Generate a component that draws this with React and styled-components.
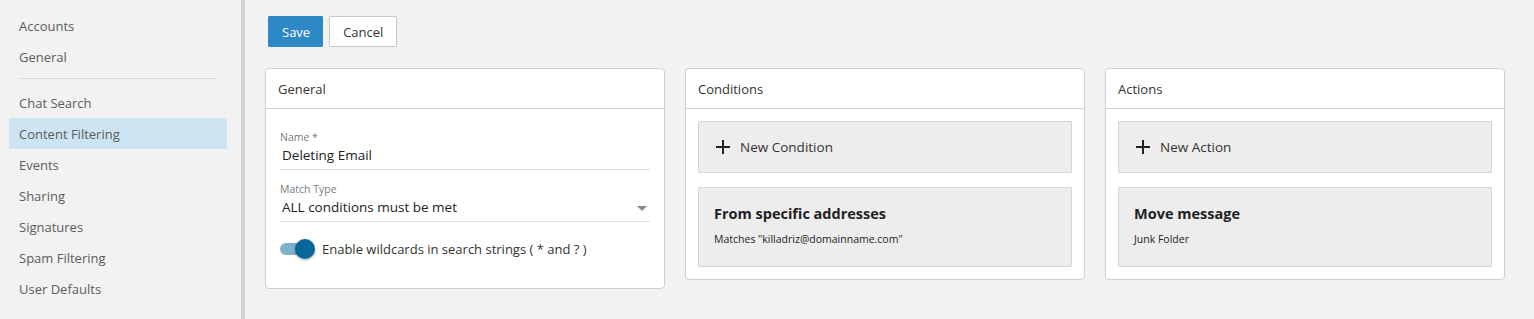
import React from "react";
import styled, { createGlobalStyle } from "styled-components";

const GlobalStyle = createGlobalStyle`
  html, body { margin: 0; padding: 0; background: #f2f2f2; }
  body { font-family: "Open Sans", "Noto Sans", sans-serif; color: #333; }
  * { box-sizing: border-box; }
`;

const Layout = styled.div`
  display: flex;
  min-height: 319px;
`;

const Sidebar = styled.nav`
  width: 245px;
  flex: none;
  border-right: 4px solid #d4d4d4;
  padding: 10px 14px 0 9px;
`;

const NavItem = styled.div`
  height: 31px;
  display: flex;
  align-items: center;
  padding-left: 10px;
  font-size: 13px;
  color: #5c5c5c;
  background: ${(p) => (p.$active ? "#cde4f2" : "transparent")};
`;

const NavDivider = styled.hr`
  border: none;
  border-top: 1px solid #d6d6d6;
  margin: 6px 10px 8px;
`;

const Main = styled.main`
  flex: 1;
  padding: 16px 20px;
`;

const Toolbar = styled.div`
  display: flex;
  gap: 6px;
  padding-left: 3px;
`;

const Button = styled.button`
  height: 31px;
  padding: ${(p) => (p.$primary ? "0 12px 0 13px" : "0 13px")};
  font-family: inherit;
  font-size: 13px;
  border-radius: 1px;
  border: 1px solid ${(p) => (p.$primary ? "#2e88c6" : "#c8c8c8")};
  background: ${(p) => (p.$primary ? "#2e88c6" : "#fff")};
  color: ${(p) => (p.$primary ? "#fff" : "#333")};
`;

const Cards = styled.div`
  display: flex;
  gap: 20px;
  align-items: flex-start;
  margin-top: 21px;
`;

const Card = styled.section`
  width: 400px;
  background: #fff;
  border: 1px solid #cfcfcf;
  border-radius: 4px;
`;

const CardHeader = styled.header`
  height: 40px;
  display: flex;
  align-items: center;
  padding-left: 12px;
  border-bottom: 1px solid #d2d2d2;
  font-size: 13px;
  color: #333;
`;

const FormBody = styled.div`
  display: flex;
  flex-direction: column;
  padding: 21px 14px 29px 14px;
`;

const Field = styled.div`
  border-bottom: 1px solid #dcdcdc;
  padding-bottom: 3px;
  margin-bottom: 12px;
  position: relative;
`;

const FieldLabel = styled.div`
  font-size: 10.5px;
  color: #7a7a7a;
  line-height: 14px;
`;

const FieldValue = styled.div`
  font-size: 13.5px;
  color: #222;
  line-height: 22px;
  padding-left: 2px;
`;

const Caret = styled.span`
  position: absolute;
  right: 3px;
  bottom: 10px;
  width: 0;
  height: 0;
  border-left: 5px solid transparent;
  border-right: 5px solid transparent;
  border-top: 5px solid #8a8a8a;
`;

const ToggleRow = styled.div`
  display: flex;
  align-items: center;
  gap: 8px;
  height: 20px;
  margin-top: 5px;
  font-size: 13px;
  color: #333;
`;

const Track = styled.span`
  position: relative;
  width: 34px;
  height: 12px;
  border-radius: 6px;
  background: #7fb1ca;
`;

const Knob = styled.span`
  position: absolute;
  right: -1px;
  top: -4px;
  width: 20px;
  height: 20px;
  border-radius: 50%;
  background: #07679b;
  box-shadow: 0 1px 3px rgba(0, 0, 0, 0.35);
`;

const ListBody = styled.div`
  display: flex;
  flex-direction: column;
  gap: 14px;
  padding: 12px;
`;

const Tile = styled.div`
  background: #ededed;
  border: 1px solid #d5d5d5;
  border-radius: 1px;
`;

const AddTile = styled(Tile)`
  height: 52px;
  display: flex;
  align-items: center;
  gap: 9px;
  padding-left: 16px;
  font-size: 13.5px;
  color: #333;
`;

const RuleTile = styled(Tile)`
  height: 80px;
  padding: 16px 15px;
`;

const RuleTitle = styled.div`
  font-size: 14.5px;
  font-weight: 700;
  color: #1f1f1f;
  line-height: 20px;
`;

const RuleDetail = styled.div`
  margin-top: 8px;
  font-size: 10.5px;
  color: #222;
  line-height: 14px;
`;

const PlusIcon = () => (
  <svg width="16" height="16" viewBox="0 0 16 16">
    <path d="M8 1v14M1 8h14" stroke="#222" strokeWidth="2" fill="none" />
  </svg>
);

const navTop = ["Accounts", "General"];
const navBottom = [
  "Chat Search",
  "Content Filtering",
  "Events",
  "Sharing",
  "Signatures",
  "Spam Filtering",
  "User Defaults",
];

export default function App() {
  return (
    <>
      <GlobalStyle />
      <Layout>
        <Sidebar>
          {navTop.map((n) => (
            <NavItem key={n}>{n}</NavItem>
          ))}
          <NavDivider />
          {navBottom.map((n) => (
            <NavItem key={n} $active={n === "Content Filtering"}>
              {n}
            </NavItem>
          ))}
        </Sidebar>
        <Main>
          <Toolbar>
            <Button $primary>Save</Button>
            <Button>Cancel</Button>
          </Toolbar>
          <Cards>
            <Card>
              <CardHeader>General</CardHeader>
              <FormBody>
                <Field>
                  <FieldLabel>Name *</FieldLabel>
                  <FieldValue>Deleting Email</FieldValue>
                </Field>
                <Field>
                  <FieldLabel>Match Type</FieldLabel>
                  <FieldValue>ALL conditions must be met</FieldValue>
                  <Caret />
                </Field>
                <ToggleRow>
                  <Track>
                    <Knob />
                  </Track>
                  Enable wildcards in search strings ( * and ? )
                </ToggleRow>
              </FormBody>
            </Card>
            <Card>
              <CardHeader>Conditions</CardHeader>
              <ListBody>
                <AddTile>
                  <PlusIcon />
                  New Condition
                </AddTile>
                <RuleTile>
                  <RuleTitle>From specific addresses</RuleTitle>
                  <RuleDetail>Matches "killadriz@domainname.com"</RuleDetail>
                </RuleTile>
              </ListBody>
            </Card>
            <Card>
              <CardHeader>Actions</CardHeader>
              <ListBody>
                <AddTile>
                  <PlusIcon />
                  New Action
                </AddTile>
                <RuleTile>
                  <RuleTitle>Move message</RuleTitle>
                  <RuleDetail>Junk Folder</RuleDetail>
                </RuleTile>
              </ListBody>
            </Card>
          </Cards>
        </Main>
      </Layout>
    </>
  );
}
